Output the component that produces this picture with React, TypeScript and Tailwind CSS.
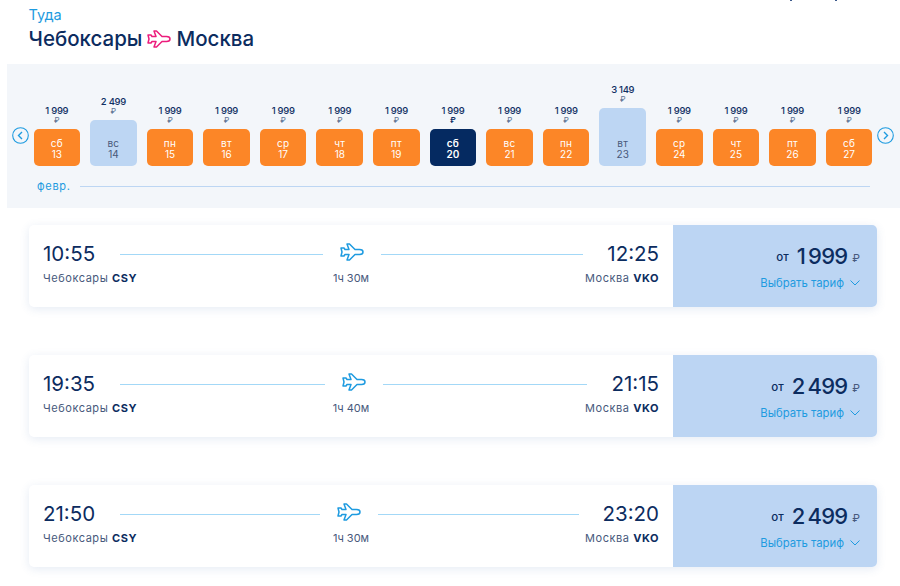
const days = [
  { w: "сб", d: 13, p: "1 999" },
  { w: "вс", d: 14, p: "2 499", kind: "mid" },
  { w: "пн", d: 15, p: "1 999" },
  { w: "вт", d: 16, p: "1 999" },
  { w: "ср", d: 17, p: "1 999" },
  { w: "чт", d: 18, p: "1 999" },
  { w: "пт", d: 19, p: "1 999" },
  { w: "сб", d: 20, p: "1 999", kind: "active" },
  { w: "вс", d: 21, p: "1 999" },
  { w: "пн", d: 22, p: "1 999" },
  { w: "вт", d: 23, p: "3 149", kind: "high" },
  { w: "ср", d: 24, p: "1 999" },
  { w: "чт", d: 25, p: "1 999" },
  { w: "пт", d: 26, p: "1 999" },
  { w: "сб", d: 27, p: "1 999" },
];

const flights = [
  { from: "10:55", to: "12:25", dur: "1ч 30м", price: "1 999" },
  { from: "19:35", to: "21:15", dur: "1ч 40м", price: "2 499" },
  { from: "21:50", to: "23:20", dur: "1ч 30м", price: "2 499" },
];

function Plane({ className }: { className: string }) {
  return (
    <svg viewBox="0 0 24 18" fill="none" stroke="currentColor" strokeWidth="1.5" strokeLinejoin="round" className={className}>
      <path d="M23 9c0-1.300-1.500-2.500-3.500-2.500H15L9.500 1H7l2 5.500H5L4 5H1l1 4-1 4h3l1-1.500h4L7 17h2.500L15 11.500h4.500c2 0 3.500-1.200 3.500-2.500z" />
    </svg>
  );
}

function Arrow({ right }: { right?: boolean }) {
  return (
    <svg viewBox="0 0 17 17" fill="none" stroke="#1e9be0" className="w-[17px] h-[17px] shrink-0 mb-[22px]">
      <circle cx="8.500" cy="8.500" r="7.800" strokeWidth="1.100" />
      <path d={right ? "M7 5l3.500 3.500L7 12" : "M10 5L6.500 8.500 10 12"} strokeWidth="1.400" />
    </svg>
  );
}

function Day({ w, d, p, kind }: { w: string; d: number; p: string; kind?: string }) {
  const box =
    kind === "active"
      ? "h-[37px] bg-[#052a61] text-white font-semibold"
      : kind === "mid"
        ? "h-[46px] bg-[#bdd6f3] text-[#48597a]"
        : kind === "high"
          ? "h-[58px] bg-[#bdd6f3] text-[#48597a]"
          : "h-[37px] bg-[#fc8627] text-white";
  return (
    <div className="w-[46.6px] flex flex-col items-center">
      <div className="text-[9.500px] leading-[10px] font-medium text-[#0f2f63] tracking-[-0.3px]">{p}</div>
      <div className={`text-[8px] leading-[9px] mb-[4px] ${kind === "active" ? "text-[#0f2f63] font-semibold" : "text-[#5e7394]"}`}>₽</div>
      <div className={`w-full rounded-[5px] flex flex-col items-center justify-end pb-[6px] ${box}`}>
        <div className="text-[10px] leading-[11px] tracking-[0.3px]">{w}</div>
        <div className="text-[10px] leading-[11px]">{d}</div>
      </div>
    </div>
  );
}

function Flight({ from, to, dur, price }: { from: string; to: string; dur: string; price: string }) {
  return (
    <div className="flex h-[82px] rounded-[5px] bg-white shadow-[0_2px_10px_rgba(70,110,180,0.14)] overflow-hidden">
      <div className="flex-1 px-[14px] pt-[16px]">
        <div className="flex items-center h-[26px] text-[#0c2c5f]">
          <div className="text-[20.500px] leading-[26px]">{from}</div>
          <div className="flex-1 h-px bg-[#a3d8f7] ml-[25px]"></div>
          <Plane className="w-[24px] h-[18px] text-[#1e9be0] mx-[17px] -mt-[5px]" />
          <div className="flex-1 h-px bg-[#a3d8f7] mr-[24px]"></div>
          <div className="text-[20.500px] leading-[26px]">{to}</div>
        </div>
        <div className="grid grid-cols-[1fr_auto_1fr] items-center mt-[3px] text-[11px] leading-[16px] text-[#47597c]">
          <div className="tracking-[0.55px]">Чебоксары <b className="text-[#0c2c5f] font-bold">CSY</b></div>
          <div>{dur}</div>
          <div className="text-right tracking-[0.55px]">Москва <b className="text-[#0c2c5f] font-bold">VKO</b></div>
        </div>
      </div>
      <div className="w-[204px] bg-[#bcd5f3] flex flex-col items-end pr-[17px] pt-[16px]">
        <div className="flex items-center h-[30px] text-[#0c2c5f]">
          <span className="text-[11.500px] font-medium mr-[8px] mt-[4px]">от</span>
          <span className="text-[22px] font-medium leading-[30px] tracking-[-0.8px] [word-spacing:-2px]">{price}</span>
          <span className="text-[11px] text-[#47597c] ml-[5px] mt-[4px]">₽</span>
        </div>
        <div className="flex items-center mt-[4px] text-[11.300px] leading-[16px] text-[#1e9be0]">
          Выбрать тариф
          <svg viewBox="0 0 10 6" fill="none" stroke="currentColor" strokeWidth="1" className="w-[10px] h-[6px] ml-[6px]">
            <path d="M.5.5L5 5 9.500.5" />
          </svg>
        </div>
      </div>
    </div>
  );
}

export default function App() {
  return (
    <div className="relative w-[900px] h-[586px] bg-white overflow-hidden font-['Inter','Noto_Sans',sans-serif]">
      <span className="absolute left-[790px] top-0 w-[2px] h-[1px] bg-[#3d5a8c]"></span>
      <span className="absolute left-[835px] top-0 w-[2px] h-[1px] bg-[#3d5a8c]"></span>
      <div className="pl-[28.500px] pt-[6px] h-[64px]">
        <div className="text-[14.500px] leading-[17px] text-[#1e9be0]">Туда</div>
        <div className="flex items-center mt-[3px] text-[20.500px] leading-[26px] font-medium text-[#0c2c5f]">
          <span>Чебоксары</span>
          <Plane className="w-[24px] h-[18px] text-[#ec1c7c] mx-[5px]" />
          <span>Москва</span>
        </div>
      </div>
      <div className="ml-[7px] h-[144px] bg-[#f3f6fa] pt-[20px]">
        <div className="flex items-end h-[82px] pl-[4.500px]">
          <Arrow />
          <div className="flex gap-[10px] mx-[5px] items-end">
            {days.map((x) => (
              <Day key={x.d} {...x} />
            ))}
          </div>
          <Arrow right />
        </div>
        <div className="flex items-center pl-[30px] pr-[30px] mt-[13px]">
          <div className="text-[11px] leading-[14px] text-[#1e9be0] tracking-[0.7px] w-[43px]">февр.</div>
          <div className="flex-1 h-px bg-[#bdd6f3]"></div>
        </div>
      </div>
      <div className="ml-[29px] w-[848px] mt-[17px] flex flex-col gap-[48px]">
        {flights.map((f) => (
          <Flight key={f.from} {...f} />
        ))}
      </div>
    </div>
  );
}
